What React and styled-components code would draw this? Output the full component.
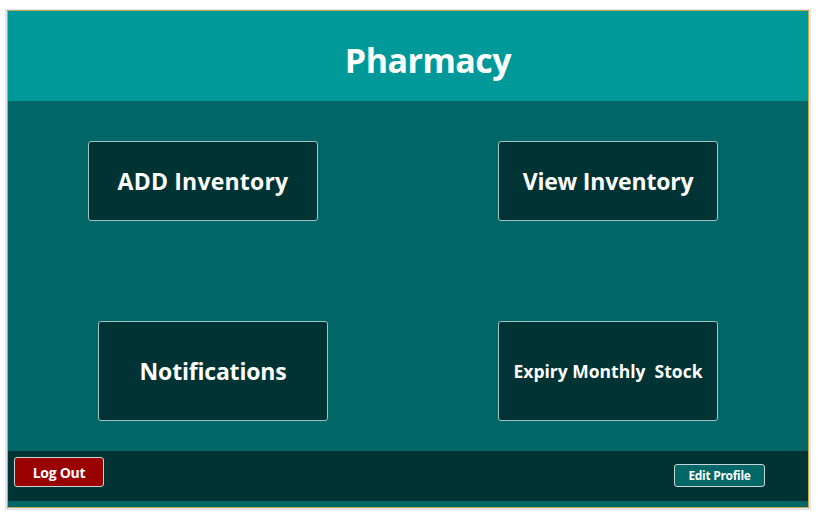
import React from "react";
import styled, { createGlobalStyle } from "styled-components";

const Global = createGlobalStyle`
  html, body { margin: 0; padding: 0; background: #ffffff; }
  body { padding: 9px 5px 0 5px; font-family: "Open Sans", "Noto Sans", sans-serif; }
`;

const Frame = styled.div`
  border: 2px solid #e2e2f6;
  border-top-width: 1px;
  width: 806px;
  box-sizing: border-box;
`;

const Panel = styled.div`
  border: 1px solid #c9a84a;
  background: #006666;
  display: flex;
  flex-direction: column;
  padding-bottom: 6px;
`;

const Header = styled.header`
  height: 90px;
  background: #009999;
  display: flex;
  align-items: center;
  justify-content: center;
  box-sizing: border-box;
  padding: 8px 0 0 40px;
`;

const Title = styled.h1`
  margin: 0;
  color: #ffffff;
  font-size: 34px;
  font-weight: 700;
  letter-spacing: -0.5px;
`;

const Board = styled.main`
  height: 350px;
  box-sizing: border-box;
  padding: 40px 0 30px;
  display: grid;
  grid-template-columns: 1fr 1fr;
  grid-template-rows: 80px 100px;
  row-gap: 100px;
`;

const Cell = styled.div`
  display: flex;
  justify-content: center;
  padding-left: ${(p) => p.$pl || 0}px;
  padding-right: ${(p) => p.$pr || 0}px;
`;

const Tile = styled.button`
  width: ${(p) => p.$w}px;
  height: 100%;
  background: #003333;
  border: 1px solid #9fc4c4;
  border-radius: 3px;
  color: #ffffff;
  font-family: "Open Sans", "Noto Sans", sans-serif;
  font-weight: 700;
  font-size: ${(p) => p.$size || 23}px;
  letter-spacing: ${(p) => p.$ls ?? -0.2}px;
  display: flex;
  align-items: center;
  justify-content: center;
  padding: 0;
  cursor: pointer;
  white-space: pre;
`;

const Footer = styled.footer`
  height: 50px;
  background: #003333;
  display: flex;
  justify-content: space-between;
  padding: 6px 43px 0 6px;
  box-sizing: border-box;
`;

const FootButton = styled.button`
  height: ${(p) => p.$h}px;
  width: ${(p) => p.$w}px;
  margin-top: ${(p) => p.$top || 0}px;
  background: ${(p) => p.$bg};
  border: 1px solid #c9d6d6;
  border-radius: 3px;
  color: #ffffff;
  font-family: "Open Sans", "Noto Sans", sans-serif;
  font-weight: 700;
  font-size: ${(p) => p.$size}px;
  letter-spacing: -0.3px;
  padding: 0;
  cursor: pointer;
`;

export default function App() {
  return (
    <>
      <Global />
      <Frame>
        <Panel>
          <Header>
            <Title>Pharmacy</Title>
          </Header>
          <Board>
            <Cell $pr={10}>
              <Tile $w={230} $ls={0.2}>ADD Inventory</Tile>
            </Cell>
            <Cell>
              <Tile $w={220}>View Inventory</Tile>
            </Cell>
            <Cell $pl={10}>
              <Tile $w={230}>Notifications</Tile>
            </Cell>
            <Cell>
              <Tile $w={220} $size={17.5} $ls={0}>{"Expiry Monthly  Stock"}</Tile>
            </Cell>
          </Board>
          <Footer>
            <FootButton $w={90} $h={30} $bg="#990000" $size={14}>
              Log Out
            </FootButton>
            <FootButton $w={91} $h={23} $top={7} $bg="#006666" $size={12}>
              Edit Profile
            </FootButton>
          </Footer>
        </Panel>
      </Frame>
    </>
  );
}
